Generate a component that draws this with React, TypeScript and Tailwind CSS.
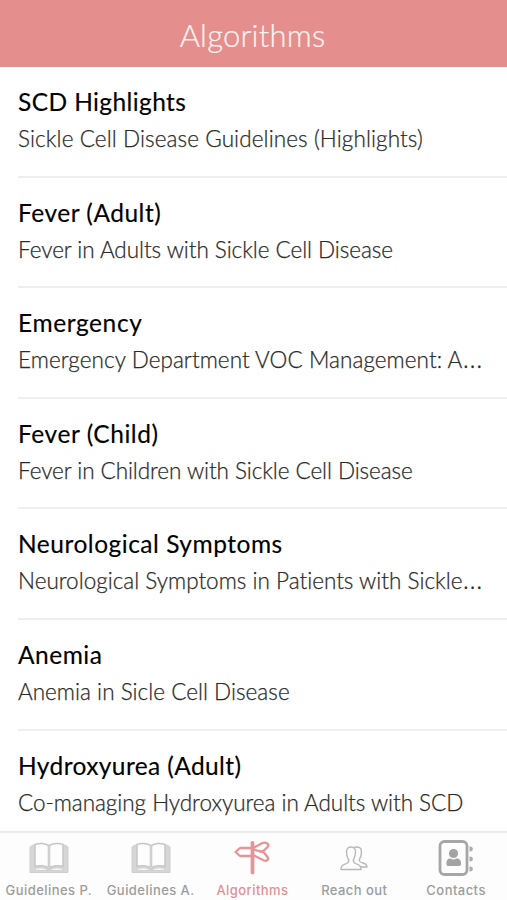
import React from 'react';

type Row = { title: string; titleTrack: string; text: string; textTrack: string; cut?: boolean };

const rows: Row[] = [
  { title: 'SCD Highlights', titleTrack: 'tracking-[0.4px]', text: 'Sickle Cell Disease Guidelines (Highlights)', textTrack: 'tracking-[0.1px]' },
  { title: 'Fever (Adult)', titleTrack: 'tracking-[0.5px]', text: 'Fever in Adults with Sickle Cell Disease', textTrack: 'tracking-[-0.05px]' },
  { title: 'Emergency', titleTrack: 'tracking-[0.6px]', text: 'Emergency Department VOC Management: A', textTrack: 'tracking-[0.07px]', cut: true },
  { title: 'Fever (Child)', titleTrack: 'tracking-[0.55px]', text: 'Fever in Children with Sickle Cell Disease', textTrack: 'tracking-[-0.07px]' },
  { title: 'Neurological Symptoms', titleTrack: 'tracking-[0.52px]', text: 'Neurological Symptoms in Patients with Sickle', textTrack: 'tracking-[0.01px]', cut: true },
  { title: 'Anemia', titleTrack: 'tracking-[0.5px]', text: 'Anemia in Sicle Cell Disease', textTrack: 'tracking-[0.03px]' },
  { title: 'Hydroxyurea (Adult)', titleTrack: 'tracking-[0.4px]', text: 'Co-managing Hydroxyurea in Adults with SCD', textTrack: 'tracking-[-0.04px]' },
];

function BookIcon() {
  return (
    <svg width="40" height="32" viewBox="0 0 40 32" fill="none">
      <path d="M4 3 L1 5 V30.5 H39 V5 L36 3 Z" fill="#d6d6d6" stroke="#cfcfcf" />
      <path d="M6 24.500 V2.500 C10 1 16.500 1 20 4 C23.500 1 30 1 34 2.500 V24.500 C30 23 24 23.500 20 26 C16 23.500 10 23 6 24.500 Z" fill="#fdfdfd" stroke="#c6c6c6" strokeWidth="1.500" />
      <path d="M20 4 V29" stroke="#d0d0d0" strokeWidth="2.600" />
      <path d="M5 28 C9 25 16 25 19 28.500 H5 Z M35 28 C31 25 24 25 21 28.500 H35 Z" fill="#f4f4f4" stroke="#cdcdcd" strokeWidth="0.800" />
    </svg>
  );
}

function SignIcon() {
  return (
    <svg width="38" height="36" viewBox="0 0 38 36" fill="none" stroke="#e69497" strokeWidth="2.300" strokeLinejoin="round" strokeLinecap="round">
      <path d="M19.500 3 V32.500" strokeWidth="3.800" />
      <path d="M19 8 H7 L2.500 12 L7 16 H19" />
      <path d="M21 7.500 L29.500 3 C32.500 1.800 36.500 3.800 35 6.500 L31.500 10 C30.500 11 29 11.300 27 11.500" />
      <path d="M21 9.500 L31 12.500 L34.800 17.500 C36 19.500 33.500 21.500 31 20.500 L21 15.500" />
    </svg>
  );
}

function PeopleIcon() {
  return (
    <svg width="30" height="28" viewBox="0 0 30 28" fill="none" stroke="#b9b9b9" strokeWidth="1.400" strokeLinejoin="round">
      <path d="M2 25.500 C2 20.500 5 21 8.500 19 C10.500 17.500 10 16 9 14.500 C7.500 12 7.500 10 7.500 7.500 C7.500 1.500 16.500 1.500 16.500 7.500 C16.500 10 16.500 12 15 14.500 C14 16 14 17.500 15.500 19 C19 21 22 20.500 22 25.500 Z" />
      <path d="M15 3.700 C18.500 2 22.500 3.500 22.500 7.500 C22.500 10 22.500 12 21 14.200 C20 15.500 20 17 21.500 18 C24 19.500 28 19 28 23 H21.500" />
    </svg>
  );
}

function ContactsIcon() {
  return (
    <svg width="38" height="38" viewBox="0 0 38 38" fill="none">
      <rect x="3" y="2.500" width="27" height="33" rx="4.500" stroke="#a6a6a6" strokeWidth="2.800" />
      <circle cx="16.500" cy="14.500" r="4.600" fill="#a3a3a3" />
      <path d="M9.500 25.500 C9 21 11 19.500 13.500 19.500 Q16.500 21.500 19.500 19.500 C22 19.500 24.500 21 24 25.500 Q23.700 27 22 27 H11.500 Q9.700 27 9.500 25.500 Z" fill="#a3a3a3" />
      <path d="M32.500 7.500 C37 7 37 13 32.500 12.500 Z M32.500 17.500 C37 17 37 23 32.500 22.500 Z M32.500 27.500 C37 27 37 33 32.500 32.500 Z" fill="#adadad" />
    </svg>
  );
}

const tabs = [
  { label: 'Guidelines P.', icon: <BookIcon />, color: 'text-[#9c9c9c]' },
  { label: 'Guidelines A.', icon: <BookIcon />, color: 'text-[#9c9c9c]' },
  { label: 'Algorithms', icon: <SignIcon />, color: 'text-[#e39093]' },
  { label: 'Reach out', icon: <PeopleIcon />, color: 'text-[#9c9c9c]' },
  { label: 'Contacts', icon: <ContactsIcon />, color: 'text-[#9c9c9c]' },
];

export default function App() {
  return (
    <div className="flex h-[900px] w-[507px] flex-col overflow-hidden bg-white font-['Lato',sans-serif]">
      <header className="flex h-[67px] shrink-0 items-center justify-center bg-[#e58e8e] pt-[3px] pr-[2px]">
        <h1 className="text-[31px] leading-[40px] font-light tracking-[0.2px] text-[#fff3f0] [-webkit-text-stroke:0.2px]">Algorithms</h1>
      </header>
      <main className="min-h-0 flex-1 overflow-hidden pl-[18px]">
        {rows.map((row) => (
          <section key={row.title} className="flex h-[110.6px] flex-col border-b-2 border-[#efefef] pt-[19px] whitespace-nowrap">
            <h2 className={`text-[24.5px] leading-[32px] font-normal text-black [-webkit-text-stroke:0.15px] ${row.titleTrack}`}>{row.title}</h2>
            <p className={`mt-[6px] text-[22.5px] leading-[30px] font-light text-[#2a2a2a] [-webkit-text-stroke:0.25px] [font-variant-ligatures:none] ${row.textTrack}`}>
              {row.text}
              {row.cut && <span className="font-['Open_Sans',sans-serif] text-[28px] leading-[0px]">…</span>}
            </p>
          </section>
        ))}
      </main>
      <nav className="-ml-[2px] grid h-[69px] w-[509px] shrink-0 grid-cols-5 border-t-2 border-[#ebebeb] bg-[#fdfdfd]">
        {tabs.map((tab) => (
          <div key={tab.label} className={`flex flex-col items-center ${tab.color}`}>
            <div className="flex h-[50px] items-center justify-center">{tab.icon}</div>
            <span className="font-['Inter',sans-serif] text-[13px] leading-[14px] font-medium tracking-[0.45px] whitespace-nowrap">{tab.label}</span>
          </div>
        ))}
      </nav>
    </div>
  );
}
